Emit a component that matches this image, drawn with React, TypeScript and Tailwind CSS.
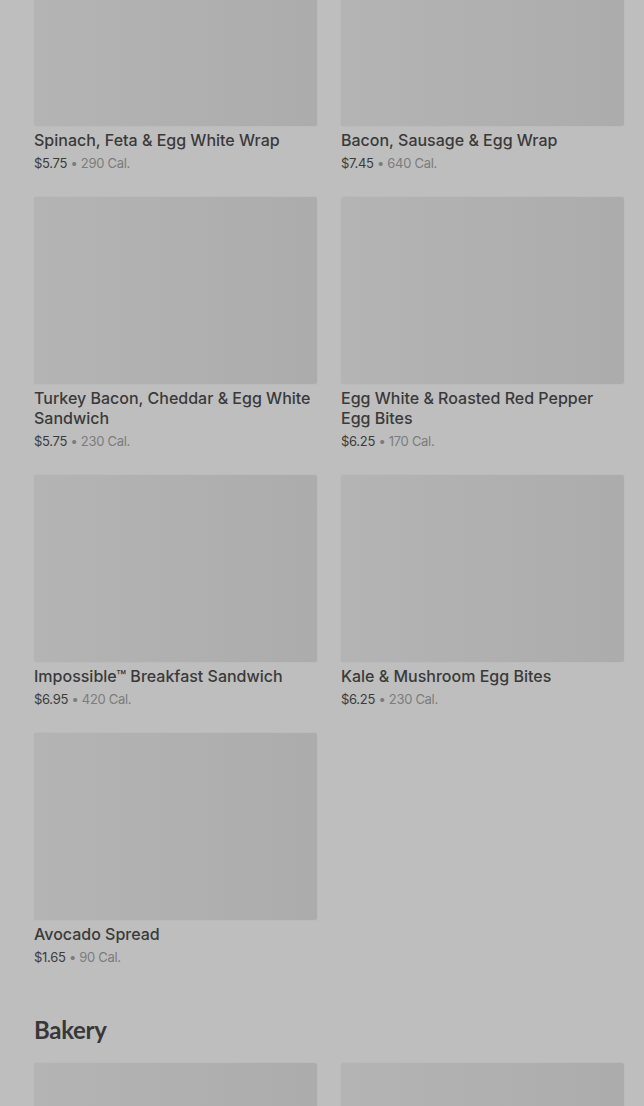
import React from 'react';

type Item = { name: string; price: string; cal: string };

const breakfast: Item[] = [
  { name: 'Spinach, Feta & Egg White Wrap', price: '$5.75', cal: '290 Cal.' },
  { name: 'Bacon, Sausage & Egg Wrap', price: '$7.45', cal: '640 Cal.' },
  { name: 'Turkey Bacon, Cheddar & Egg White Sandwich', price: '$5.75', cal: '230 Cal.' },
  { name: 'Egg White & Roasted Red Pepper Egg Bites', price: '$6.25', cal: '170 Cal.' },
  { name: 'Impossible™ Breakfast Sandwich', price: '$6.95', cal: '420 Cal.' },
  { name: 'Kale & Mushroom Egg Bites', price: '$6.25', cal: '230 Cal.' },
  { name: 'Avocado Spread', price: '$1.65', cal: '90 Cal.' },
];

const Tile = () => (
  <div className="h-[187px] w-full rounded-[2px] bg-gradient-to-r from-[#b4b4b4] to-[#acacac] shadow-[0_0_2px_rgba(0,0,0,0.06)]" />
);

const Card = ({ item }: { item: Item }) => (
  <div>
    <Tile />
    <h4 className="mt-1 text-[16px] leading-5 font-medium text-[#3a3a3a]">{item.name}</h4>
    <p className="mt-1 text-[13px] leading-[18px] tracking-[-0.3px] text-[#3c3c3c]">
      {item.price} <span className="text-[#7c7c7c]">• {item.cal}</span>
    </p>
  </div>
);

export default function App() {
  return (
    <div className="min-h-[1106px] w-full overflow-hidden bg-[#bebebe] font-['Inter',sans-serif]">
      <div className="-mt-[61px] pl-[34px] pr-[20px]">
        <div className="grid grid-cols-2 gap-x-6 gap-y-[25px]">
          {breakfast.map((item) => (
            <Card key={item.name} item={item} />
          ))}
        </div>

        <h2 className="mt-[50px] text-[24px] leading-7 font-bold tracking-[-0.3px] text-[#383838] font-['Lato',sans-serif]">
          Bakery
        </h2>
        <div className="mt-[19px] grid grid-cols-2 gap-x-6">
          <Tile />
          <Tile />
        </div>
      </div>
    </div>
  );
}
